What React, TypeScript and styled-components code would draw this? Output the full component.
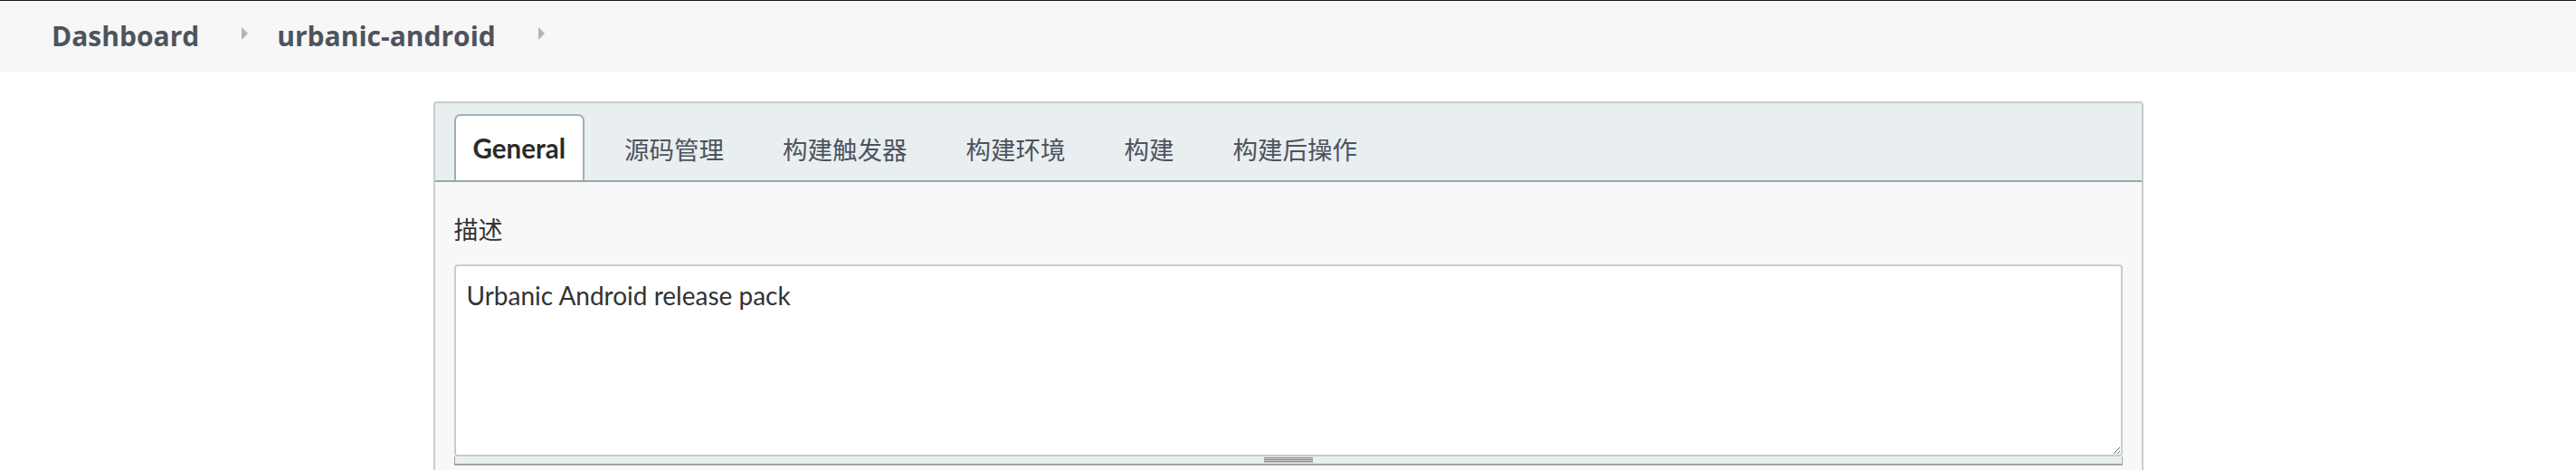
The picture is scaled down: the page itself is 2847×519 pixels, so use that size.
import React from "react";
import styled, { createGlobalStyle } from "styled-components";

const GlobalStyle = createGlobalStyle`
    html, body {
        margin: 0;
        padding: 0;
        background: #fff;
    }
    body {
        font-family: "Lato", "Noto Sans CJK SC", sans-serif;
        color: #333;
    }
`;

const Header = styled.header`
    height: 79px;
    border-top: 1px solid #1b1b1b;
    background: #f7f7f7;
    display: flex;
    align-items: center;
    padding-left: 57px;
`;

const Crumbs = styled.ol`
    display: flex;
    align-items: center;
    list-style: none;
    margin: 0;
    padding: 0;
`;

const Crumb = styled.li`
    display: flex;
    align-items: center;
    font-family: "Open Sans", "Noto Sans CJK SC", sans-serif;
    font-size: 30px;
    font-weight: 700;
    color: #4d545d;
    line-height: 1;
    margin-top: -2px;
`;

const Chevron = styled.span`
    display: inline-block;
    width: 0;
    height: 0;
    border-top: 7px solid transparent;
    border-bottom: 7px solid transparent;
    border-left: 7px solid #b3b3b3;
    margin: -8px 32px 0 47px;
`;

const Main = styled.main`
    padding-top: 32px;
    display: flex;
    justify-content: center;
`;

const Panel = styled.section`
    width: 1890px;
    box-sizing: border-box;
    border: 2px solid #cacaca;
    border-radius: 4px;
    background: #f8f8f8;
    overflow: hidden;
`;

const TabBar = styled.nav`
    display: flex;
    align-items: flex-end;
    gap: 23px;
    height: 87px;
    box-sizing: border-box;
    padding: 12px 21px 0;
    background: #e9eef1;
    border-bottom: 2px solid #9aa6ae;
`;

const Tab = styled.button<{ $active?: boolean }>`
    height: 73px;
    box-sizing: border-box;
    padding: 0 19px;
    font-family: "Lato", "Noto Sans CJK SC", sans-serif;
    font-size: ${(p) => (p.$active ? "29.5px" : "27.5px")};
    font-weight: ${(p) => (p.$active ? 700 : 400)};
    color: ${(p) => (p.$active ? "#2b2b2b" : "#4d545d")};
    background: ${(p) => (p.$active ? "#fff" : "transparent")};
    border: ${(p) => (p.$active ? "2px solid #a3aeb6" : "2px solid transparent")};
    border-bottom: none;
    border-radius: 7px 7px 0 0;
    cursor: pointer;
`;

const Body = styled.div`
    padding: 34px 21px 40px;
`;

const Label = styled.div`
    font-size: 27px;
    line-height: 38px;
    color: #333;
    margin-bottom: 19px;
`;

const TextArea = styled.textarea`
    display: block;
    width: 100%;
    height: 212px;
    box-sizing: border-box;
    padding: 14px 12px;
    border: 2px solid #cbcbcb;
    border-radius: 4px;
    background: #fff;
    font-family: "Lato", "Noto Sans CJK SC", sans-serif;
    font-size: 28px;
    line-height: 36px;
    color: #333;
    resize: vertical;
    outline: none;
`;

const Grippie = styled.div`
    height: 8px;
    background: #e9eef1;
    border: 1px solid #9aa6ae;
    border-top: none;
    border-bottom-width: 2px;
    display: flex;
    justify-content: center;
    align-items: center;
`;

const Handle = styled.span`
    width: 54px;
    height: 6px;
    background: repeating-linear-gradient(
        to bottom,
        #8a8f8a 0,
        #8a8f8a 1px,
        #c9cbc9 1px,
        #c9cbc9 2px
    );
`;

const tabs = ["General", "源码管理", "构建触发器", "构建环境", "构建", "构建后操作"];

export default function App() {
    return (
        <>
            <GlobalStyle />
            <Header>
                <Crumbs>
                    <Crumb>Dashboard</Crumb>
                    <Chevron />
                    <Crumb>urbanic-android</Crumb>
                    <Chevron />
                </Crumbs>
            </Header>
            <Main>
                <Panel>
                    <TabBar>
                        {tabs.map((t, i) => (
                            <Tab key={t} $active={i === 0}>
                                {t}
                            </Tab>
                        ))}
                    </TabBar>
                    <Body>
                        <Label>描述</Label>
                        <TextArea defaultValue="Urbanic Android release pack" />
                        <Grippie>
                            <Handle />
                        </Grippie>
                    </Body>
                </Panel>
            </Main>
        </>
    );
}
